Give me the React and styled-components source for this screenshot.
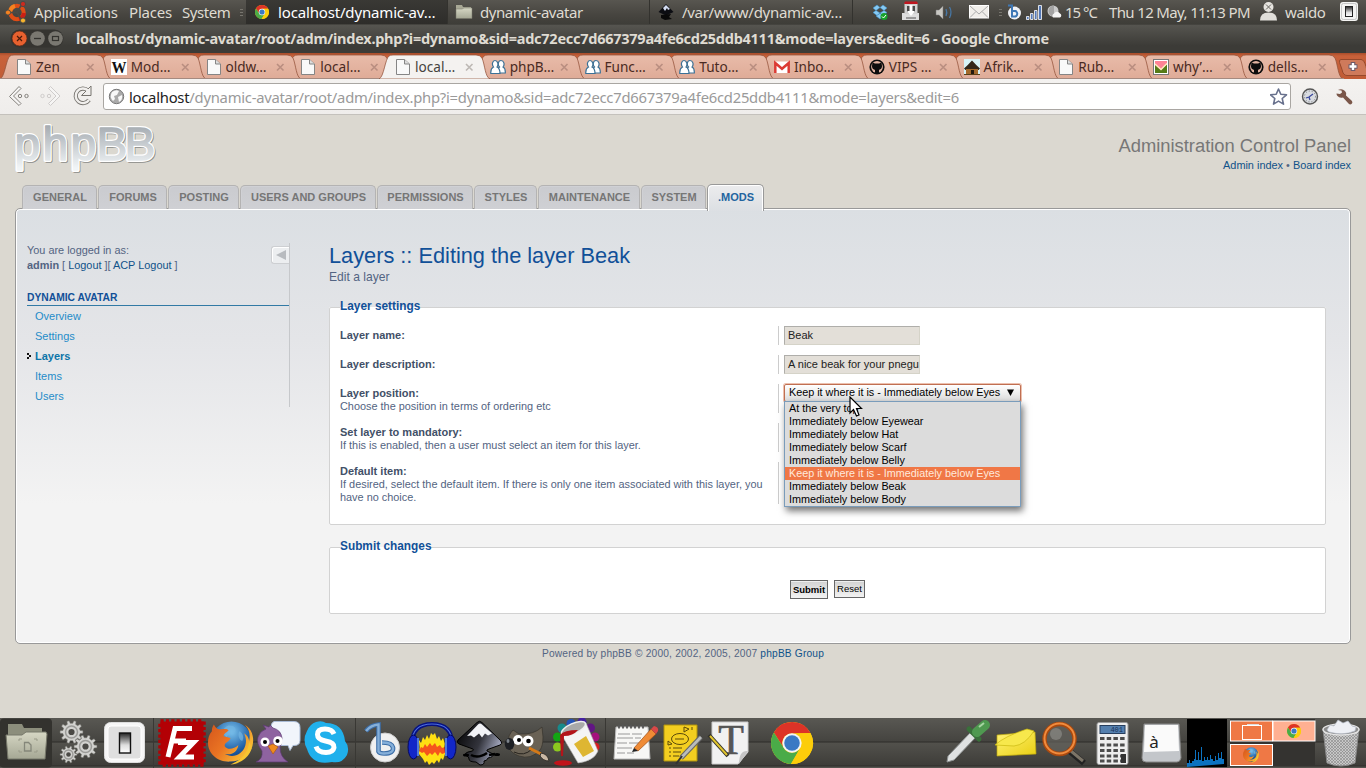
import React from "react";
import styled, { createGlobalStyle, css } from "styled-components";

const GlobalStyle = createGlobalStyle`
  * { box-sizing: border-box; }
  html, body { margin: 0; padding: 0; overflow: hidden; }
  body { width: 1366px; height: 768px; background: #dbd8d0; font-family: "Liberation Sans", Arial, sans-serif; }
  svg { display: block; flex: none; }
`;

const uiFont = `"Noto Sans", "Open Sans", sans-serif`;

const Desktop = styled.div`
  width: 1366px;
  height: 768px;
  display: flex;
  flex-direction: column;
  position: relative;
`;

/* ---------- top panel ---------- */
const TopPanel = styled.header`
  height: 24px;
  display: flex;
  align-items: center;
  background: linear-gradient(#585650, #474540 60%, #3e3d38);
  font: 15px/24px ${uiFont};
  color: #dfdbd2;
  white-space: nowrap;
`;
const PanelText = styled.span`
  display: block;
  flex: none;
  width: ${(p) => p.$w}px;
  letter-spacing: ${(p) => p.$ls || 0}px;
  color: ${(p) => p.$c || "#dfdbd2"};
`;
const Task = styled.div`
  flex: none;
  width: ${(p) => p.$w}px;
  height: 24px;
  display: flex;
  align-items: center;
  border-right: 1px solid #33322e;
  background: ${(p) => (p.$active ? "linear-gradient(#3a3935, #2e2d2a)" : "transparent")};
`;

/* ---------- window chrome ---------- */
const TitleBar = styled.div`
  height: 29px;
  display: flex;
  align-items: center;
  background: linear-gradient(#33322e, #565550 1px, #3c3b37 75%, #3c3b37);
  color: #dfdbd2;
  white-space: nowrap;
  font: bold 14.5px/29px ${uiFont};
`;
const WindowTitle = styled.span`
  padding-left: 12px;
  padding-bottom: 1px;
  letter-spacing: ${(p) => p.$ls}px;
`;
const TabStrip = styled.div`
  height: 26px;
  display: flex;
  background: linear-gradient(#a84c2a, #c8613a 3px, #c15c36);
  overflow: hidden;
`;
const Tab = styled.div`
  flex: none;
  width: 94.75px;
  height: 26px;
  position: relative;
  z-index: ${(p) => p.$z};
  font: 13.6px/26px ${uiFont};
  color: ${(p) => (p.$active ? "#45423d" : "#4a2a22")};
`;
const TabShape = styled.svg`
  position: absolute;
  left: 0;
  top: 0;
`;
const TabContent = styled.div`
  position: relative;
  display: flex;
  align-items: center;
  height: 26px;
  padding: 2px 0 0 16px;
  white-space: nowrap;
`;
const TabLabel = styled.span`
  flex: none;
  width: 54px;
  padding-left: 4px;
  letter-spacing: ${(p) => p.$ls || 0}px;
`;
const Toolbar = styled.div`
  height: 36px;
  display: flex;
  align-items: center;
  background: linear-gradient(#f4f2f0, #efedeb);
  border-bottom: 1px solid #c4c1bc;
`;
const UrlBox = styled.div`
  width: 1188px;
  height: 27px;
  display: flex;
  align-items: center;
  background: #fff;
  border: 1px solid #a9a6a2;
  border-radius: 3px;
  font: 14.8px/24px ${uiFont};
  color: #9a9a9a;
  white-space: nowrap;
  b { font-weight: 400; color: #222; }
`;
const UrlText = styled.span`
  width: 1141px;
  letter-spacing: ${(p) => p.$ls}px;
`;

/* ---------- web page ---------- */
const Page = styled.main`
  height: 603px;
  background: #dbd8d0;
  display: flex;
  flex-direction: column;
  padding: 0 15px;
  color: #536482;
  font-size: 10.9px;
`;
const PageHead = styled.div`
  height: 69px;
  display: flex;
  justify-content: space-between;
`;
const HeadRight = styled.div`
  text-align: right;
  padding-top: 19px;
  line-height: 15px;
`;
const HeadTitle = styled.h1`
  margin: 0;
  font: 18.35px/24px "Liberation Sans", Arial, sans-serif;
  color: #777;
`;
const A = styled.a`
  color: #105289;
`;
const AcpTabs = styled.nav`
  height: 25px;
  display: flex;
  align-items: flex-end;
  padding-left: 7px;
  position: relative;
  z-index: 1;
`;
const AcpTab = styled.div`
  flex: none;
  width: ${(p) => p.$w}px;
  height: 24px;
  margin-right: ${(p) => p.$m}px;
  padding-left: 1px;
  border: 1px solid #b4b3b3;
  border-bottom: 0;
  border-radius: 5px 5px 0 0;
  background: linear-gradient(#cacbcf, #cfd0d4);
  box-shadow: inset 1px 1px 0 #d0d1d5;
  color: #767676;
  font: bold 11px/23px "Liberation Sans", Arial, sans-serif;
  text-align: center;
  white-space: nowrap;
  ${(p) =>
    p.$active &&
    css`
      height: 27px;
      margin-bottom: -2px;
      border-color: #999;
      background: linear-gradient(#ececee, #dcdfe3);
      box-shadow: inset 1px 1px 0 #fff, inset -1px 0 0 #fff;
      color: #23649f;
      line-height: 25px;
    `}
`;
const Panel = styled.section`
  height: 436px;
  margin-top: -1px;
  display: flex;
  border: 1px solid #999;
  border-radius: 5px;
  background: linear-gradient(#dbdfe3, #e4e5e8 30%, #f3f3f3 68%, #f3f3f3);
  box-shadow: inset 0 0 0 1px #fff;
  padding: 34px 24px 0 11px;
`;
const Side = styled.aside`
  width: 263px;
  height: 164px;
  border-right: 1px solid #c6c8cb;
  line-height: 15px;
`;
const SideTop = styled.div`
  display: flex;
  justify-content: space-between;
  height: 47px;
`;
const Toggle = styled.div`
  width: 18px;
  height: 18px;
  margin-top: 3px;
  border: 1px solid #cdcfd2;
  border-right: 0;
  border-radius: 3px 0 0 3px;
  background: #eceef0;
  box-shadow: inset 1px 1px 0 #fff;
  display: flex;
  align-items: center;
  justify-content: center;
`;
const SideHead = styled.div`
  height: 16px;
  border-bottom: 1px solid #327aa5;
  font: bold 10.3px/16px "Liberation Sans", Arial, sans-serif;
  color: #115098;
  white-space: nowrap;
`;
const SideItem = styled.div`
  height: 20px;
  line-height: 20px;
  font-size: 11px;
  display: flex;
  align-items: center;
  color: ${(p) => (p.$on ? "#0d75a8" : "#1f8cc9")};
  font-weight: ${(p) => (p.$on ? 700 : 400)};
  svg { margin-right: 4px; }
`;
const Main = styled.div`
  flex: 1;
  margin-left: 39px;
`;
const Title = styled.h2`
  margin: 0;
  font: 21.75px/26px "Liberation Sans", Arial, sans-serif;
  color: #115098;
`;
const SubTitle = styled.p`
  margin: 0 0 16px;
  padding-top: 1px;
  height: 15px;
  font-size: 12.1px;
  line-height: 15px;
`;
const Fieldset = styled.fieldset`
  margin: 0 0 15px;
  min-width: 0;
  height: ${(p) => p.$h}px;
  border: 1px solid #d2d2d2;
  border-radius: 2px;
  background: #fff;
  padding: ${(p) => p.$pt}px 10px 0;
`;
const Legend = styled.legend`
  padding: 0;
  font: bold 11.85px/14px "Liberation Sans", Arial, sans-serif;
  color: #115098;
  position: relative;
  top: -1px;
`;
const Row = styled.div`
  display: grid;
  grid-template-columns: 438px 1fr;
  height: ${(p) => p.$h}px;
  margin-bottom: 10px;
`;
const Term = styled.div`
  padding: 3px 10px 0 0;
  line-height: 13px;
  white-space: pre;
  b { color: #425067; font-size: 11px; }
`;
const Def = styled.div`
  border-left: 1px solid #ccc;
  padding-left: 5px;
  position: relative;
  font-size: 10.8px;
`;
const Field = styled.div`
  width: 136px;
  height: 19px;
  border: 1px solid #d5d3c8;
  border-top-color: #afaeaa;
  border-left-color: #afaeaa;
  background: #e3dfd8;
  color: #222;
  padding: 0 0 0 3px;
  line-height: 17px;
  font-size: 11px;
  white-space: nowrap;
`;
const Select = styled.div`
  width: 237px;
  height: 18px;
  display: flex;
  justify-content: space-between;
  align-items: center;
  padding: 0 6px 2px 4px;
  border: 1px solid #c06f52;
  border-radius: 2px;
  box-shadow: 0 0 0 1px #ecc0ae;
  background: linear-gradient(#fff, #dcdcdc);
  color: #000;
`;
const Menu = styled.div`
  position: absolute;
  left: 5px;
  top: 17px;
  width: 237px;
  border: 1px solid #7a9cbb;
  background: #dcdcdc;
  box-shadow: 2px 4px 7px rgba(0, 0, 0, 0.55);
  z-index: 2;
`;
const Option = styled.div`
  height: 13px;
  line-height: 13px;
  padding-left: 4px;
  white-space: nowrap;
  color: ${(p) => (p.$on ? "#ffe9dc" : "#000")};
  background: ${(p) => (p.$on ? "#f07746" : "transparent")};
`;
const Pointer = styled.svg`
  position: absolute;
  left: 70px;
  top: 12px;
  z-index: 3;
`;
const Buttons = styled.div`
  display: flex;
  justify-content: center;
  align-items: flex-start;
  gap: 6px;
`;
const Button = styled.div`
  width: ${(p) => p.$w}px;
  height: ${(p) => p.$h}px;
  border: 1px solid #666;
  background: linear-gradient(#d2d2d2, #f2f2f2);
  box-shadow: inset 0 1px 0 #efefef;
  text-align: center;
  line-height: ${(p) => p.$h - 2}px;
  white-space: nowrap;
  color: #000;
  font-size: 9.5px;
  font-weight: ${(p) => (p.$bold ? 700 : 400)};
`;
const Footer = styled.div`
  padding-top: 3px;
  line-height: 14px;
  font-size: 10.2px;
  letter-spacing: 0.18px;
  text-align: center;
`;

/* ---------- dock ---------- */
const Dock = styled.footer`
  height: 50px;
  display: flex;
  background: linear-gradient(#595853, #454440 23px, #2d2c29 24px, #52514c 25px, #3e3d39 47px, #2d2c29 48px, #55544f 49px);
`;

/* Icons share the desktop's coordinate system through their view boxes. */
const Ico = ({ x, y, w, h, children }) => (
  <svg width={w} height={h} viewBox={`${x} ${y} ${w} ${h}`}>{children}</svg>
);

const ChromeMark = ({ cx, cy, r }) => (
  <g transform={`translate(${cx} ${cy}) scale(${r / 20})`}>
    <circle r="20" fill="#fccd0a" />
    <path d="M-17.3-10A20 20 0 0 1 17.6-9.5L0-9A9 9 0 0 0-8 4.5Z" fill="#dd3327" />
    <path d="M-17.3-10A20 20 0 0 0-1 20L8 4.5A9 9 0 0 1-8 4.5Z" fill="#4aab48" />
    <path d="M17.6-9.5A20 20 0 0 1-1 20L8 4.5A9 9 0 0 0 0-9Z" fill="#fccd0a" />
    <circle r="9.2" fill="#f4f4f4" />
    <circle r="7.4" fill="#3a79c4" />
  </g>
);

const FirefoxMark = ({ cx, cy, r }) => (
  <g transform={`translate(${cx} ${cy}) scale(${r / 23})`}>
    <circle cx="1" cy="-1" r="21" fill="url(#ffGlobe)" />
    <path d="M-2-18c6 0 8 3 7 6-2 3-7 2-9 6-4-3-6-9 2-12zM9-12c4 2 5 7 3 10-3-1-5-6-3-10z" fill="#72b5e3" opacity=".7" />
    <path d="M-19-12c0-4 1-5 2-7 2 4 4 5 8 5 4-1 7 0 7 1-1 2-5 3-5 6l7 2c-1 4-6 4-6 8 2 4 9 4 14-1-1 8-8 11-14 9 8 5 18 1 21-8 2-6 0-10-1-13 3 2 5 5 5 8 2-8-1-14-5-17 8 4 10 13 9 19-2 12-12 19-23 19C-14 20-23 10-23 0c0-5 1-9 4-12z" fill="url(#ffFox)" />
    <path d="M23-3c0 15-10 24-23 25 12-5 18-12 19-23 2 3 2 5 1 8 2-3 3-6 3-10z" fill="#f7c531" />
  </g>
);

const gearPath = (n, r) => {
  let d = "";
  for (let i = 0; i < n; i++) {
    const a = (i * 2 * Math.PI) / n;
    const s = Math.PI / n;
    [[-0.55, r * 0.76], [-0.32, r], [0.32, r], [0.55, r * 0.76]].forEach(([k, q], j) => {
      d += `${i + j ? "L" : "M"}${(q * Math.cos(a + k * s)).toFixed(2)} ${(q * Math.sin(a + k * s)).toFixed(2)}`;
    });
  }
  return d + "Z";
};
const Gear = ({ cx, cy, r }) => (
  <g transform={`translate(${cx} ${cy})`}>
    <path d={gearPath(10, r)} fill="#d2d2cf" stroke="#75746f" strokeWidth=".5" />
    <circle r={r * 0.52} fill="none" stroke="#9b9b98" strokeWidth="1.5" />
    <circle r={r * 0.27} fill="#4a4945" />
  </g>
);

const Favicon = ({ kind }) => (
  <svg width="16" height="16" viewBox="0 0 16 16">
    {kind === "page" && (
      <>
        <path d="M1.500 .5H9.500L14.500 5V15.500H1.500Z" fill="#f9f9f9" stroke="#858585" />
        <path d="M9.500 .5V5H14.500" fill="#ddd" stroke="#858585" />
      </>
    )}
    {kind === "wiki" && (
      <>
        <rect width="16" height="16" fill="#fff" />
        <text x="8" y="13.500" textAnchor="middle" fontFamily="Liberation Serif" fontWeight="bold" fontSize="16" textLength="15" lengthAdjust="spacingAndGlyphs" fill="#111">W</text>
      </>
    )}
    {kind === "phpbb" && (
      <g fill="#fff" stroke="#3b7196" strokeWidth="1.200">
        <path d="M7 14C7 10 8 9 9.500 8 7.500 6 8 1.500 11 1.500s4 4 2 6.500c2 1 2.500 3 2.300 6Z" />
        <path d="M.8 14.500C.5 10.500 1.500 9 3.500 8 1.500 5.500 2.500 1.500 5 1.500s4 4 2 6.500c2 1 3 2.500 3 6.500Z" />
      </g>
    )}
    {kind === "gmail" && (
      <>
        <rect y="2.500" width="16" height="11.500" rx="1" fill="#fff" />
        <path d="M1.300 14V4L8 9.800 14.700 4V14" fill="none" stroke="#dc3b34" strokeWidth="2.500" />
      </>
    )}
    {kind === "github" && (
      <>
        <circle cx="8" cy="8" r="7.600" fill="#0d0d0d" />
        <circle cx="8" cy="8" r="5.900" fill="#e2b3a1" />
        <path d="M3.500 3.500L6 4.500H10L12.500 3.500 13 7C13 10 11 10.500 10 11V15H6V11C5 10.500 3 10 3 7Z" fill="#0d0d0d" />
      </>
    )}
    {kind === "hut" && (
      <>
        <rect width="16" height="16" fill="#d8f3f6" />
        <path d="M0 9.500Q4 6 8 1.500 12 6 16 9.500L14.500 11H1.500Z" fill="#332719" />
        <path d="M2 10H14V15H2Z" fill="#a36a2c" />
        <path d="M7 11H10V15H7Z" fill="#241a10" />
        <path d="M0 15H16V16H0Z" fill="#594019" />
      </>
    )}
    {kind === "why" && (
      <>
        <rect x=".5" y=".5" width="15" height="15" fill="#fff" stroke="#777" />
        <rect x="2" y="2" width="12" height="12" fill="#ff8395" />
        <path d="M2 6L8 11 14 5V14H2Z" fill="#557b17" />
        <path d="M2 5L8 10.500 14 4.500" fill="none" stroke="#ffeabf" strokeWidth="1.500" />
      </>
    )}
  </svg>
);

const tabs = [
  ["Zen", "page"], ["Mod…", "wiki"], ["oldw…", "page"], ["local…", "page"], ["local…", "page"],
  ["phpB…", "phpbb"], ["Func…", "phpbb"], ["Tuto…", "phpbb"], ["Inbo…", "gmail"], ["VIPS …", "github"],
  ["Afrik…", "hut"], ["Rub…", "page"], ["why’…", "why"], ["dells…", "github"],
];

const acpTabs = [
  ["GENERAL", 75, 1], ["FORUMS", 69, 1], ["POSTING", 71, 1], ["USERS AND GROUPS", 136, 1],
  ["PERMISSIONS", 96, 1], ["STYLES", 63, 1], ["MAINTENANCE", 102, 1], ["SYSTEM", 65, 1], [".MODS", 57, 0],
];

const options = [
  "At the very top", "Immediately below Eyewear", "Immediately below Hat", "Immediately below Scarf",
  "Immediately below Belly", "Keep it where it is - Immediately below Eyes", "Immediately below Beak", "Immediately below Body",
];

const Defs = () => (
  <svg width="0" height="0">
    <defs>
      <radialGradient id="ffGlobe" cx=".5" cy=".25" r=".8"><stop offset="0" stopColor="#7cc4ee" /><stop offset=".6" stopColor="#1d5ca4" /><stop offset="1" stopColor="#0c2f66" /></radialGradient>
      <linearGradient id="ffFox" x1="0" y1="0" x2="1" y2=".6"><stop offset="0" stopColor="#d4561c" /><stop offset=".5" stopColor="#ea7423" /><stop offset="1" stopColor="#f8c035" /></linearGradient>
      <linearGradient id="folder" x2="0" y2="1"><stop offset="0" stopColor="#d6d7c4" /><stop offset="1" stopColor="#a5a794" /></linearGradient>
      <linearGradient id="logo" gradientUnits="userSpaceOnUse" x1="0" x2="0" y1="125" y2="168"><stop offset="0" stopColor="#a5abb1" /><stop offset="1" stopColor="#f1f5f7" /></linearGradient>
      <linearGradient id="ink" x1="0" x2="1" y2=".4"><stop offset="0" stopColor="#000" /><stop offset=".6" stopColor="#33343c" /><stop offset="1" stopColor="#9ea2b8" /></linearGradient>
      <linearGradient id="knob" x2="0" y2="1"><stop offset="0" stopColor="#222" /><stop offset=".6" stopColor="#ddd" /><stop offset="1" stopColor="#fff" /></linearGradient>
      <linearGradient id="yellow" x2="1" y2="1"><stop offset="0" stopColor="#fff275" /><stop offset="1" stopColor="#e9cf12" /></linearGradient>
      <linearGradient id="tab" x2="0" y2="1"><stop offset="0" stopColor="#e8bba9" /><stop offset="1" stopColor="#dfab97" /></linearGradient>
      <pattern id="mesh" width="3" height="3" patternUnits="userSpaceOnUse"><rect width="3" height="3" fill="#c8c8c8" /><path d="M0 0L3 3M3 0L0 3" stroke="#858585" strokeWidth=".6" /></pattern>
    </defs>
  </svg>
);

const DefsHolder = styled.div`
  position: absolute;
  width: 0;
  height: 0;
`;

const TopBar = () => (
  <TopPanel>
    <Ico x={0} y={0} w={34} h={24}>
      <circle cx="17" cy="12.500" r="6.700" fill="none" stroke="#df4d16" strokeWidth="4" />
      <path d="M10 12A7 7 0 0 1 15 6" fill="none" stroke="#f58220" strokeWidth="4" />
      <path d="M19 19A7 7 0 0 0 24 13" fill="none" stroke="#cc1f16" strokeWidth="4" />
      <path d="M17 12.500L7 12.500M17 12.500L22.500 3M17 12.500L22.500 22" stroke="#4c4a45" strokeWidth="1.600" />
      <g stroke="#4c4a45"><circle cx="8" cy="12.500" r="2.600" fill="#f58220" /><circle cx="23" cy="4" r="2.600" fill="#cc2a1f" /><circle cx="23" cy="20.500" r="2.600" fill="#f6b32c" /></g>
    </Ico>
    <PanelText $w={95} $ls={-0.2}>Applications</PanelText>
    <PanelText $w={53} $ls={-0.2}>Places</PanelText>
    <PanelText $w={56} $ls={-0.45}>System</PanelText>
    <Ico x={238} y={0} w={8} h={24}><path d="M240 9.500h3M240 12.500h3M240 15.500h3" stroke="#77756e" /></Ico>
    <Task $w={202} $active>
      <Ico x={246} y={0} w={32} h={24}><ChromeMark cx={262} cy={12} r={7} /></Ico>
      <PanelText $w={165} $ls={-0.16} $c="#fff">localhost/dynamic-av…</PanelText>
    </Task>
    <Task $w={202}>
      <Ico x={448} y={0} w={32} h={24}><path d="M456 5h6l1 2h8v11h-15z" fill="#a8a895" /><path d="M456 9h6l2-1h8v10.500h-16z" fill="url(#folder)" stroke="#77776a" strokeWidth=".5" /></Ico>
      <PanelText $w={165} $ls={-0.45}>dynamic-avatar</PanelText>
    </Task>
    <Task $w={203}>
      <Ico x={650} y={0} w={32} h={24}><path d="M666 4L673.500 12 666 15.500 658.500 12Z" fill="#0c0d12" /><path d="M663 8L666 5l4 4-2 1-1-2-2 3z" fill="#d5def3" /><path d="M661 15l10-1-2 3 3 2-7 1-4-2z" fill="#090909" /></Ico>
      <PanelText $w={165} $ls={-0.3}>/var/www/dynamic-av…</PanelText>
    </Task>
    <Ico x={853} y={0} w={212} h={24}>
      <g fill="#87c9f2" stroke="#3b94d2" strokeWidth=".5"><path d="M873 8l4-3 3 2.500-4 3zM880 7.500l3-2.500 4 3-3 2.500zM873 12.500l3-2 4 2.500-3 2.500zM880 13l4-2.500 3 2-4 3z" /><path d="M876 16l4-2.500 3.500 2.500-3.500 3z" /></g>
      <circle cx="884" cy="16.500" r="3.500" fill="#17a22c" /><path d="M882 16.500l1.500 1.500 2.500-3" stroke="#fff" fill="none" />
      <path d="M902 13h17v7h-17z" fill="#dedede" /><path d="M904.500 3h13v11h-13z" fill="#d2d2d2" /><path d="M905 1.500h12l1 2.500h-14z" fill="#bf1720" /><path d="M907 6h8v6h-8z" fill="#4b4b4b" /><path d="M909.500 5h3v6h2.500l-4 5-4-5h2.500z" fill="#fff" /><path d="M906 18h10" stroke="#555" />
      <path d="M936 10h3l4-4v13l-4-4h-3z" fill="#c9c8c3" stroke="#777" strokeWidth=".5" /><path d="M946 9q1.500 3.500 0 7M949.500 7q3 5 0 11" stroke="#4777a5" fill="none" strokeWidth="1.300" />
      <rect x="969.500" y="5.500" width="19" height="12.500" fill="#f0eeea" stroke="#fff" /><path d="M970 6l9 8 9-8M970 17.500l6-6M988 17.500l-6-6" stroke="#aaa" fill="none" />
      <path d="M999 9.500h3M999 12.500h3M999 15.500h3" stroke="#77756e" />
      <circle cx="1014.500" cy="13" r="6.500" fill="#f0f2f6" /><path d="M1008 5.500h4v11h3.500a3 3 0 0 0 0-5.500h-3" stroke="#3f78b6" fill="none" strokeWidth="2" />
      <g fill="#5478b6" stroke="#fff" strokeWidth=".8"><path d="M1026.500 16.500h2.500v3h-2.500zM1030.500 13.500h2.500v6h-2.500zM1034.500 10.500h2.500v9h-2.500zM1038.500 5.500h3v14h-3z" /></g>
      <circle cx="1053" cy="11" r="5.500" fill="#c9c9c9" /><path d="M1054 5.500a5.500 5.500 0 0 0 0 11z" fill="#a3a3a3" /><path d="M1053 17.500a2.500 2.500 0 0 1 1-4 3.500 3.500 0 0 1 6 0 2.200 2.200 0 0 1 0 4z" fill="#f4f4f4" />
    </Ico>
    <PanelText $w={44} $ls={-1}>15 °C</PanelText>
    <PanelText $w={148} $ls={-0.64}>Thu 12 May, 11:13 PM</PanelText>
    <Ico x={1257} y={0} w={28} h={24}><circle cx="1268.500" cy="7" r="5" fill="#e6e4df" /><path d="M1260 20.500q0-8 8.500-8t8.500 8z" fill="#e0ded9" /><path d="M1266 4.500l5 5m0-5l-5 5" stroke="#65635e" /></Ico>
    <PanelText $w={53} $ls={-0.4}>waldo</PanelText>
    <Ico x={1338} y={0} w={24} h={24}><rect x="1340" y="2" width="18" height="19" rx="3" fill="#f4f4f2" /><rect x="1341.500" y="3.500" width="15" height="16" rx="2" fill="none" stroke="#c5c5c5" /><rect x="1345.500" y="6.500" width="7" height="10" fill="url(#knob)" stroke="#222" /></Ico>
  </TopPanel>
);

const BrowserChrome = () => (
  <>
    <TitleBar>
      <Ico x={0} y={24} w={64} h={29}>
        <rect x="10.500" y="29.500" width="53" height="18" rx="9" fill="#353430" />
        <circle cx="19.500" cy="38.500" r="7.500" fill="#e8612f" stroke="#5a2b1a" strokeWidth=".7" /><path d="M17 36l5 5m0-5l-5 5" stroke="#4a1c0c" strokeWidth="1.200" />
        <circle cx="37.500" cy="38.500" r="7.300" fill="#7a7871" /><path d="M34 38.500h7" stroke="#33322e" strokeWidth="1.300" />
        <circle cx="55.500" cy="38.500" r="7.300" fill="#7a7871" /><rect x="52.500" y="36.500" width="6" height="4" fill="none" stroke="#33322e" strokeWidth="1.200" />
      </Ico>
      <WindowTitle $ls={-0.26}>localhost/dynamic-avatar/root/adm/index.php?i=dynamo&amp;sid=adc72ecc7d667379a4fe6cd25ddb4111&amp;mode=layers&amp;edit=6 - Google Chrome</WindowTitle>
    </TitleBar>
    <TabStrip>
      {tabs.map(([label, kind], i) => (
        <Tab key={i} $active={i === 4} $z={i === 4 ? 30 : 20 - i}>
          <TabShape width="112" height="26" viewBox="0 0 112 26">
            <path d="M0 26C5 24 6 6 10 3Q11 2 14 2H97Q101 2 103 5C106 12 106 24 111 26Z" fill={i === 4 ? "#f4f2f0" : "url(#tab)"} stroke="#925038" strokeOpacity=".75" />
            {i !== 4 && <path d="M0 25.500H112" stroke="#a58a80" />}
          </TabShape>
          <TabContent>
            <Favicon kind={kind} />
            <TabLabel>{label}</TabLabel>
            <svg width="9" height="9" viewBox="0 0 9 9"><path d="M1 1l6.500 6.500m0-6.500L1 7.500" stroke={i === 4 ? "#bdb8b4" : "#b98e80"} strokeWidth="1.600" /></svg>
          </TabContent>
        </Tab>
      ))}
      <Ico x={1326} y={53} w={40} h={26}><path d="M1340 59.500h20q3 0 5 7l2 9h-21q-4 0-5-6l-2.500-7q-.5-3 1.500-3z" fill="#cf7a5b" stroke="#96492c" /><path d="M1352 62v9m-4.500-4.500h9" stroke="#6d5a6a" strokeWidth="4.600" /><path d="M1352 63v7m-3.500-3.500h7" stroke="#fff" strokeWidth="2.400" /></Ico>
    </TabStrip>
    <Toolbar>
      <Ico x={0} y={79} w={103} h={35}>
        <g fill="none" strokeLinejoin="round">
          <path d="M19 86.500l2 2-7.500 7.500 7.500 7.500-2 2L9.500 96.500z" fill="#f6f5f4" stroke="#84817c" />
          <circle cx="20" cy="96" r="1.700" stroke="#84817c" /><circle cx="26.500" cy="96" r="1.700" stroke="#84817c" />
          <g stroke="#cfcccb"><path d="M50.500 86.500l-2 2 7.500 7.500-7.500 7.500 2 2 9.500-9.500z" fill="#f6f5f4" /><circle cx="49" cy="96" r="1.700" /><circle cx="42.500" cy="96" r="1.700" /></g>
          <path d="M88 90.500a7.300 7.300 0 1 0 1 9.500" stroke="#77746f" strokeWidth="4.200" /><path d="M91 86v9.500h-9.500z" fill="#f1efed" stroke="#77746f" /><path d="M88 90.500a7.300 7.300 0 1 0 1 9.500" stroke="#f1efed" strokeWidth="2.400" />
        </g>
      </Ico>
      <UrlBox>
        <Ico x={104} y={84} w={25} h={25}><circle cx="116.500" cy="96.500" r="7.200" fill="#aaa" stroke="#777" /><path d="M112 92q4-3 7-1l-2 4-3 1 1 3-2 2q-4-4-1-9zM118 97l4-2q1 5-3 7z" fill="#f9f9f9" /></Ico>
        <UrlText $ls={-0.25}><b>localhost</b>/dynamic-avatar/root/adm/index.php?i=dynamo&amp;sid=adc72ecc7d667379a4fe6cd25ddb4111&amp;mode=layers&amp;edit=6</UrlText>
        <Ico x={1270} y={86} w={18} h={22}><path d="M1278.500 89l2.300 5.300 5.700.5-4.300 3.700 1.300 5.600-5-3-5 3 1.300-5.600-4.300-3.700 5.700-.5z" fill="#fff" stroke="#68718d" strokeWidth="1.600" strokeLinejoin="round" /></Ico>
      </UrlBox>
      <Ico x={1291} y={79} w={75} h={35}>
        <circle cx="1310" cy="96.500" r="7.500" fill="#d8dbe0" stroke="#555" strokeWidth="1.400" /><circle cx="1310" cy="96.500" r="5.500" fill="none" stroke="#777" strokeDasharray="1 2" /><path d="M1313 94l-4 3-3 1M1309 97l1 3" stroke="#39479c" strokeWidth="1.300" fill="none" />
        <path d="M1338 90q4-2 7 1 2 2 1 4.500l6 5.500q1 2-.5 3t-3-.5l-5.500-6q-3.500 1-5.500-1.500-1-1-1-2.500l3.500.5 2-1.500-.5-2z" fill="#7a5649" />
      </Ico>
    </Toolbar>
  </>
);

const App = () => (
  <Desktop>
    <GlobalStyle />
    <DefsHolder><Defs /></DefsHolder>
    <TopBar />
    <BrowserChrome />
    <Page>
      <PageHead>
        <Ico x={15} y={115} w={145} h={66}>
          <g fontFamily="Liberation Sans" fontSize="46" strokeLinejoin="round">
            <text x="15.500 43.500 71.500 97.500 125.500" y="161" fill="#8b8b88" stroke="#8b8b88" strokeWidth="3.500">phpBB</text>
            <text x="14.500 42.500 70.500 96.500 124.500" y="159.500" fill="#fff" stroke="#fff" strokeWidth="4">phpBB</text>
            <text x="14.500 42.500 70.500 96.500 124.500" y="159.500" fill="url(#logo)" stroke="url(#logo)" strokeWidth="1.500">phpBB</text>
          </g>
        </Ico>
        <HeadRight>
          <HeadTitle>Administration Control Panel</HeadTitle>
          <A>Admin index</A> • <A>Board index</A>
        </HeadRight>
      </PageHead>
      <AcpTabs>
        {acpTabs.map(([t, w, m]) => <AcpTab key={t} $w={w} $m={m} $active={t === ".MODS"}>{t}</AcpTab>)}
      </AcpTabs>
      <Panel>
        <Side>
          <SideTop>
            <div>You are logged in as:<br /><b>admin</b> [ <A>Logout</A> ][ <A>ACP Logout</A> ]</div>
            <Toggle><svg width="10" height="10" viewBox="0 0 10 10"><path d="M0 5L10 0V10Z" fill="#b8bbbf" /></svg></Toggle>
          </SideTop>
          <SideHead>DYNAMIC AVATAR</SideHead>
          {["Overview", "Settings", "Layers", "Items", "Users"].map((t) => (
            <SideItem key={t} $on={t === "Layers"}>
              <svg width="4" height="7" viewBox="0 0 4 7">{t === "Layers" && <path d="M0 0h2v2h-2zM2 2h2v2h-2zM0 4h2v2h-2z" fill="#111" />}</svg>{t}
            </SideItem>
          ))}
        </Side>
        <Main>
          <Title>Layers :: Editing the layer Beak</Title>
          <SubTitle>Edit a layer</SubTitle>
          <Fieldset $h={225} $pt={12}>
            <Legend>Layer settings</Legend>
            <Row $h={19}><Term><b>Layer name:</b></Term><Def><Field>Beak</Field></Def></Row>
            <Row $h={19}><Term><b>Layer description:</b></Term><Def><Field>A nice beak for your pnegu</Field></Def></Row>
            <Row $h={29}>
              <Term><b>Layer position:</b>{"\n"}Choose the position in terms of ordering etc</Term>
              <Def>
                <Select>Keep it where it is - Immediately below Eyes<svg width="7" height="7" viewBox="0 0 7 7"><path d="M0 .5H7L3.500 7Z" fill="#000" /></svg></Select>
                <Menu>{options.map((o, i) => <Option key={o} $on={i === 5}>{o}</Option>)}</Menu>
                <Pointer width="14" height="22" viewBox="0 0 14 22"><path d="M1 1V17L4.500 13.500 7.500 20 10 19 7.500 12.500H12.500Z" fill="#fff" stroke="#000" strokeWidth="1.200" /></Pointer>
              </Def>
            </Row>
            <Row $h={29}><Term><b>Set layer to mandatory:</b>{"\n"}If this is enabled, then a user must select an item for this layer.</Term><Def /></Row>
            <Row $h={42}><Term><b>Default item:</b>{"\n"}If desired, select the default item. If there is only one item associated with this layer, you{"\n"}have no choice.</Term><Def /></Row>
          </Fieldset>
          <Fieldset $h={74} $pt={26}>
            <Legend>Submit changes</Legend>
            <Buttons><Button $w={38} $h={19} $bold>Submit</Button><Button $w={31} $h={18}>Reset</Button></Buttons>
          </Fieldset>
        </Main>
      </Panel>
      <Footer>Powered by phpBB © 2000, 2002, 2005, 2007 <A>phpBB Group</A></Footer>
    </Page>
    <Dock>
      <Ico x={0} y={718} w={54} h={50}>
        <rect x="0" y="718.500" width="52" height="49" rx="4" fill="#33322e" />
        <path d="M8 724h14l2 4h18v10H8z" fill="#8c8e7c" /><path d="M6 735h16l4-3h20l1 2-2 25H8z" fill="url(#folder)" stroke="#77786a" />
        <path d="M19 741v-2h3M34 739h3v2M19 750v2h3M34 752h3v-2" stroke="#9a9b89" fill="none" /><path d="M24.500 742.500h4l2.500 2.500v6h-6.500z" fill="none" stroke="#85877a" strokeWidth="1.300" />
      </Ico>
      <Ico x={54} y={718} w={48} h={50}><Gear cx={71.500} cy={732} r={11.500} /><Gear cx={85.500} cy={746.500} r={11.500} /><Gear cx={68.500} cy={754.500} r={8.500} /></Ico>
      <Ico x={102} y={718} w={55} h={50}>
        <rect x="104.500" y="722.500" width="40" height="40" rx="6" fill="#f6f6f6" stroke="#ddd" /><rect x="108" y="726" width="33" height="33" rx="3" fill="#dfdfdf" stroke="#fff" /><rect x="119.500" y="733" width="11" height="20" fill="url(#knob)" stroke="#111" strokeWidth="1.400" />
        <path d="M153.500 718v50" stroke="#393834" />
      </Ico>
      <Ico x={157} y={718} w={50} h={50}>
        <rect x="160.500" y="721.500" width="43" height="43" fill="#b30005" /><rect x="160.500" y="721.500" width="43" height="43" fill="none" stroke="#b30005" strokeWidth="4.500" strokeDasharray="3.200 2.175" />
        <path d="M168 757L175 728.500H192M171.500 741H186M178 742.500H193.500L179.500 757H194" fill="none" stroke="#fff" strokeWidth="5" />
      </Ico>
      <Ico x={207} y={718} w={48} h={50}><FirefoxMark cx={230.500} cy={743} r={22.500} /></Ico>
      <Ico x={255} y={718} w={48} h={50}>
        <path d="M274 721.500h20q6 0 6 6v13q0 5-6 5h-1l-3 5-2-5h-12q-5 0-5-6v-12q0-5 3-6z" fill="#f1f5fb" stroke="#a9bbd5" />
        <path d="M256 762q7-3 6-11-6-8-4-14 2-6 8-8l-3-4 6 2 1-2 3 3q8 2 9 10 0 6-2 9 0 10 8 15z" fill="#8e63a0" stroke="#5c3a71" strokeWidth=".7" />
        <circle cx="265" cy="742" r="4.500" fill="#fff" /><circle cx="278" cy="741" r="4.800" fill="#fff" /><circle cx="265" cy="742" r="2" /><circle cx="277.500" cy="741" r="2" /><path d="M268 746l5-2 5 3-5 7z" fill="#ee8a1e" stroke="#a7560c" strokeWidth=".6" />
      </Ico>
      <Ico x={303} y={718} w={57} h={50}>
        <path d="M316 722q6-2 10 1 17 0 19 18 5 6 2 14-5 9-15 7-20 4-25-13-5-9 0-18 3-7 9-9z" fill="#20b0ec" />
        <path d="M334 734q-2-5-9-5-7.500 0-7.500 5.500 0 5 8 6.500 9 1.500 8.500 6.500-1 5-8 5-8 0-10-6" fill="none" stroke="#fff" strokeWidth="5" />
        <path d="M355.500 718v50" stroke="#393834" />
      </Ico>
      <Ico x={360} y={718} w={47} h={50}>
        <circle cx="385" cy="747.500" r="14.500" fill="#f0f0f0" stroke="#ccc" /><path d="M366 731q5-6 12.500-6.500v27q1 2 5.500 2 10 0 9-6-1-5-11-5" fill="none" stroke="#3c6ea8" strokeWidth="4.600" /><path d="M366 731q5-6 12.500-6.500v27q1 2 5.500 2 10 0 9-6-1-5-11-5" fill="none" stroke="#85afd9" strokeWidth="2.400" />
      </Ico>
      <Ico x={407} y={718} w={50} h={50}>
        <path d="M412 744q0-20 20-20t20 20" fill="none" stroke="#061180" strokeWidth="4" /><path d="M412 743q0-19 20-19t20 19" fill="none" stroke="#4d6fe0" strokeWidth="1.200" />
        <path d="M419 754v-14l2 3 2-6 2 3 2-5 2 4 2-6 2 2 2-2 2 6 2-3 2 5 2-3 2 6v10l-2 6-2-2-2 5-2-3-3 4-2-2-3 3-2-4-2 2-2-4z" fill="#ffdf13" /><path d="M419 751l2-4 2 1 2-4 2 3 3-4 2 3 3-3 2 4 3-2 2 3 3-1v6l-3 1-2-2-2 4-3-4-3 3-2-2-3 3-3-4-2 1z" fill="#f5541d" />
        <ellipse cx="413.500" cy="747" rx="5.500" ry="12" fill="#1227c8" stroke="#05095f" /><ellipse cx="450.500" cy="747" rx="5.500" ry="12" fill="#1227c8" stroke="#05095f" /><path d="M418 738v18M446 738v18" stroke="#4f79db" strokeWidth="2" />
      </Ico>
      <Ico x={457} y={718} w={47} h={50}>
        <path d="M477 722.500q2.500-2.500 5 0L501 741q2 3-1 4l-11 4q-3 1-2 2l6 3q1 3-5 4-1 3-4 3 1 4-4 4l-4-3q-7 0-7-3 1-2-4-4 0-2 3-3 7-1 5-3l-14-5q-3-1-1-4z" fill="url(#ink)" stroke="#000" />
        <path d="M467 736l11-11.500q2-2 4 0l10 9-4 2-3-2-3 4-3-4-5 4-3-2z" fill="#f2f3f7" /><path d="M471 755q7 4 16-2M489 755l6-1" stroke="#000" strokeWidth="2.500" fill="none" /><ellipse cx="497" cy="754.500" rx="3" ry="1.500" /><ellipse cx="466" cy="755" rx="3" ry="1.500" />
      </Ico>
      <Ico x={504} y={718} w={48} h={50}>
        <path d="M509 736q2-4 4-6l6 4q15 1 23-7l1 10q0 9-3 13-9 10-21 6-8-3-11-9z" fill="#6a6255" stroke="#37332c" strokeWidth=".7" />
        <circle cx="518" cy="740" r="5" fill="#fff" /><circle cx="528" cy="741" r="5.500" fill="#fff" /><circle cx="519" cy="740" r="2" /><circle cx="528.500" cy="741" r="2.300" /><ellipse cx="509.500" cy="744" rx="4.800" ry="6" fill="#1e2024" /><ellipse cx="508" cy="741" rx="1.500" ry="2" fill="#7d848d" />
        <path d="M514 752q10 5 18-3" stroke="#25221d" fill="none" /><path d="M529 748l14 7" stroke="#d57917" strokeWidth="3" /><path d="M541 753q7 1 8 8-6 0-9-5z" fill="#c9b8a5" stroke="#35312c" />
      </Ico>
      <Ico x={552} y={718} w={56} h={50}>
        <circle cx="571" cy="723.500" r="4.500" fill="#2553b7" /><circle cx="562" cy="728" r="4.500" fill="#178a8c" /><circle cx="557.500" cy="737" r="4.500" fill="#13a513" /><circle cx="557.500" cy="747" r="4.500" fill="#8cc820" /><circle cx="582" cy="722" r="4.500" fill="#4420a0" /><circle cx="590.500" cy="728" r="4.500" fill="#621584" /><circle cx="595" cy="737" r="4.500" fill="#a5107d" /><circle cx="595" cy="747" r="4.500" fill="#d81c20" />
        <path d="M561 734L586 723 598 751q-4 10-20 12z" fill="#f4f4f4" stroke="#aaa" strokeWidth=".6" /><path d="M574 744l12-8 8 15-11 6z" fill="#deb632" /><ellipse cx="573.500" cy="728.500" rx="13" ry="5" transform="rotate(-24 573.500 728.500)" fill="#a9a9a9" stroke="#eee" strokeWidth="1.500" /><path d="M560 735q4-5 18-5-5 6-14 6l-1 20h-2z" fill="#b3141a" /><ellipse cx="563" cy="763" rx="9" ry="2.800" fill="#c0131a" />
        <path d="M605.500 718v50" stroke="#393834" />
      </Ico>
      <Ico x={608} y={718} w={52} h={50}>
        <path d="M616 727h32l2 32h-36z" fill="#f7f7f5" stroke="#bbb" /><path d="M619 724.500v4m4-4v4m4-4v4m4-4v4m4-4v4m4-4v4m4-4v4" stroke="#555" strokeWidth="1.800" /><path d="M618 734h12m2 0h10M617 738h16m2 0h6M617 743h10m2 0h12M617 748h15M617 753h8m2 0h7" stroke="#999" /><path d="M634 748l17-19 5 5-18 17z" fill="#ef8b35" stroke="#9c4c14" strokeWidth=".7" /><path d="M651 729l3-3q5 1 4 5l-2 3z" fill="#d84848" /><path d="M634 748l-2 4 6-1z" fill="#222" />
      </Ico>
      <Ico x={660} y={718} w={44} h={50}>
        <path d="M664 725h33v36h-33z" fill="#f3ce20" stroke="#b1930c" /><ellipse cx="680" cy="739" rx="8.500" ry="5.500" fill="none" stroke="#5a4a0a" /><path d="M684 727l5 2-5 3zM692 727v3M668 741l4 3-4 1zM675 739h9M669 748h2m2 0h9M669 752h2m2 0h8M669 756h2m2 0h6" stroke="#5a4a0a" fill="none" /><path d="M681 758l20-21" stroke="#666" strokeWidth="5" /><path d="M681 758l20-21" stroke="#b9bcbc" strokeWidth="2.800" /><path d="M682 756l-6 8" stroke="#333" strokeWidth="2" />
      </Ico>
      <Ico x={704} y={718} w={60} h={50}>
        <path d="M712 722h36v30l-10 12h-26z" fill="#f1f1f1" stroke="#ccc" /><path d="M748 751q-9-1-9 13z" fill="#c5c5c5" /><text x="731" y="754" textAnchor="middle" fontFamily="Liberation Serif" fontSize="42" fill="#555" stroke="#555" strokeWidth=".6">T</text><path d="M709 735l19 21" stroke="#32312a" strokeWidth="4" /><path d="M710 736l17 19" stroke="#e0c42d" strokeWidth="2" />
      </Ico>
      <Ico x={764} y={718} w={176} h={50}><ChromeMark cx={792} cy={743} r={21} /></Ico>
      <Ico x={940} y={718} w={53} h={50}>
        <path d="M976 737l-22 23-7 2 1-6 22-23z" fill="#dfe1e1" stroke="#8e9292" /><path d="M969 729l10 10" stroke="#39703a" strokeWidth="5" strokeLinecap="round" /><path d="M977 732l8-7" stroke="#4f9950" strokeWidth="10" strokeLinecap="round" /><path d="M979 727l5-4" stroke="#a6d5a2" strokeWidth="2" />
      </Ico>
      <Ico x={993} y={718} w={47} h={50}><path d="M997 735l38-3 1 22-39 2z" fill="url(#yellow)" stroke="#bba80b" strokeWidth=".7" /><path d="M995 745q10-9 32-16l7 2q-9 14-20 15z" fill="#f7e84c" stroke="#c8b80f" strokeWidth=".7" /></Ico>
      <Ico x={1040} y={718} w={50} h={50}><path d="M1067 749l17 14" stroke="#222" strokeWidth="6" /><path d="M1071 751l12 10" stroke="#7b7467" strokeWidth="3" /><circle cx="1059.500" cy="739" r="15" fill="#64625d" fillOpacity=".7" stroke="#a9490f" strokeWidth="4.500" /><circle cx="1059.500" cy="738.500" r="15" fill="none" stroke="#f08b3d" strokeWidth="2" /><circle cx="1056" cy="734" r="6" fill="#a5a49f" opacity=".45" /></Ico>
      <Ico x={1090} y={718} w={46} h={50}>
        <rect x="1097" y="722.500" width="31" height="42" rx="2" fill="#eee" stroke="#999" /><rect x="1100" y="725.500" width="25" height="8" fill="#547fae" stroke="#273e5d" /><text x="1123" y="732" textAnchor="end" fontFamily="Liberation Mono" fontSize="7" fill="#183358">401</text>
        <g stroke="#4c4c4c" strokeWidth="3" strokeDasharray="4.500 2.200"><path d="M1100 738.500h25M1100 745h25M1100 750.500h25M1100 756h25M1100 761h25" /></g><rect x="1121" y="754" width="5" height="9" fill="#333" />
      </Ico>
      <Ico x={1136} y={718} w={50} h={50}><path d="M1144 724h35l2 34q-1 4-4 4h-31q-4 0-4-4z" fill="#c3c6ca" stroke="#888" /><path d="M1145 725h33l1 26-35 1z" fill="#fafafa" /><text x="1154" y="748" textAnchor="middle" fontFamily="Noto Sans" fontSize="17" fill="#222">à</text></Ico>
      <Ico x={1186} y={718} w={43} h={50}>
        <rect x="1187" y="719" width="40" height="48" fill="#000" /><path d="M1187 767v-4h2v-3h1v3h2v-2h2v-2h1v-9h1v10h2v-8h1v8h2v-13h1v14h2v-4h1v3h2v-3h1v3h2v-5h1v4h2v2h2v-5h1v4h2v-7h1v5h2v-6h1v7h2v5z" fill="#0c72c0" />
      </Ico>
      <Ico x={1229} y={718} w={90} h={50}>
        <rect x="1230" y="719" width="85" height="47" fill="#343330" /><rect x="1230.500" y="721" width="42" height="20" fill="#ef7845" stroke="#fff" /><rect x="1273" y="721" width="42" height="20" fill="#ffb092" stroke="#fff" /><rect x="1230.500" y="744.500" width="42" height="21" fill="#ef7845" stroke="#fff" /><rect x="1242.500" y="725.500" width="19" height="14" fill="#ef7845" stroke="#fff" /><path d="M1247 724.500h12" stroke="#ddd" strokeWidth="1" /><ChromeMark cx={1294} cy={731} r={7} /><FirefoxMark cx={1251} cy={755} r={8} />
      </Ico>
      <Ico x={1319} y={718} w={47} h={50}>
        <path d="M1323 729l4 34q14 6 28 0l4-34z" fill="url(#mesh)" stroke="#888" /><ellipse cx="1341" cy="729.500" rx="18" ry="5.500" fill="#8b8b8b" stroke="#e5e5e5" strokeWidth="1.500" /><path d="M1327 730l3-5 4 1 4-6 5 3 5-2 4 5 4 1-1 4q-12 5-26 1z" fill="#eef0f5" stroke="#b5bac5" strokeWidth=".7" />
      </Ico>
    </Dock>
  </Desktop>
);

export default App;
